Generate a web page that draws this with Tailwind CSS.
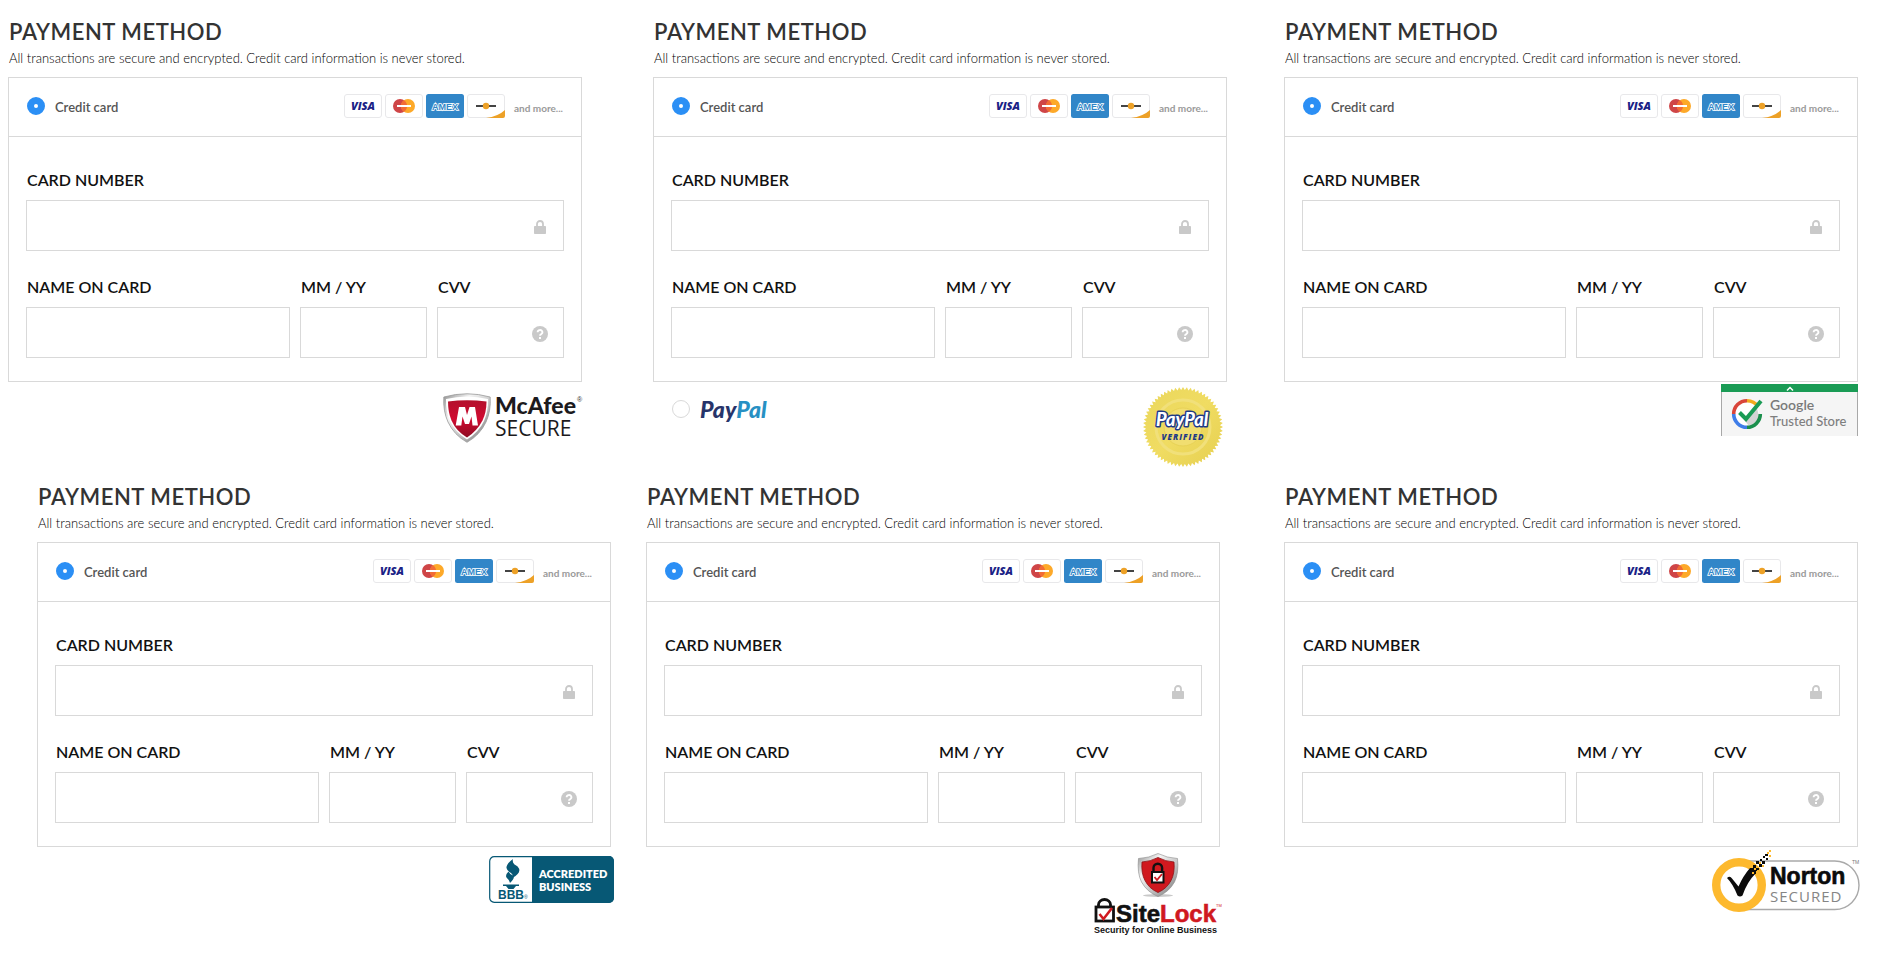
<!DOCTYPE html>
<html lang="en">
<head>
    <meta charset="UTF-8">
    <meta name="viewport" content="width=device-width, initial-scale=1.0">
    <title>Payment Method - Trust Badges</title>
    <script src="https://cdn.jsdelivr.net/npm/@tailwindcss/browser@4"></script>
</head>
<body class="bg-white font-['Lato',sans-serif] text-[#333]">

    <!-- payment form, copied into every section below -->
    <template id="payment-form">
        <h2 class="text-[22px] leading-8 font-semibold tracking-wide pl-px">PAYMENT METHOD</h2>
        <p class="text-[13px] leading-5 font-light text-black pl-px">All transactions are secure and encrypted. Credit card information is never stored.</p>
        <form class="mt-[9px] border border-[#d9d9d9]">
            <div class="flex items-center justify-between h-[59px] px-[18px] pb-[3px] border-b border-[#d9d9d9]">
                <label class="flex items-center gap-[10px] text-[13px] font-semibold text-[#555]">
                    <input type="radio" value="card" checked class="appearance-none size-[18px] rounded-full border border-[#d9d9d9] bg-white checked:border-[7px] checked:border-[#2b8ff5]">
                    <span class="pt-1">Credit card</span>
                </label>
                <div class="flex items-center gap-[3px]">
                    <svg class="w-[38px] h-6" viewBox="0 0 38 24">
                        <rect x="0.5" y="0.5" width="37" height="23" rx="2.5" fill="#fff" stroke="#e8e8ea"/>
                        <text x="19" y="16" text-anchor="middle" font-family="Open Sans" font-size="11" font-weight="800" font-style="italic" fill="#1a2286">VISA</text>
                    </svg>
                    <svg class="w-[38px] h-6" viewBox="0 0 38 24">
                        <rect x="0.5" y="0.5" width="37" height="23" rx="2.5" fill="#fff" stroke="#e8e8ea"/>
                        <circle cx="15" cy="12" r="7" fill="#cf4547"/>
                        <circle cx="23" cy="12" r="7" fill="#fda929"/>
                        <path d="M19 6.2a7 7 0 0 1 0 11.6a7 7 0 0 1 0-11.6z" fill="#f26b35"/>
                        <path d="M12 12h14" stroke="#fff" stroke-width="2"/>
                    </svg>
                    <svg class="w-[38px] h-6" viewBox="0 0 38 24">
                        <rect width="38" height="24" rx="2.5" fill="#3186c8"/>
                        <text x="19" y="15.500" text-anchor="middle" font-family="Liberation Sans" font-size="9" font-weight="700" fill="#3186c8" stroke="#fff" stroke-width="1.600" paint-order="stroke">AMEX</text>
                    </svg>
                    <svg class="w-[38px] h-6" viewBox="0 0 38 24">
                        <rect x="0.5" y="0.5" width="37" height="23" rx="2.5" fill="#fff" stroke="#e8e8ea"/>
                        <path d="M9 12h20" stroke="#444" stroke-width="2"/>
                        <circle cx="19" cy="12" r="3.2" fill="#eda127"/>
                        <path d="M38 16v6a2 2 0 0 1-2 2H19q12-1.500 19-8z" fill="#eda127"/>
                    </svg>
                    <span class="ml-[6px] pt-1 text-[10px] leading-4 font-bold text-[#9a9a9a]">and more...</span>
                </div>
            </div>
            <div class="px-[17px] pt-[31px] pb-[23px] text-[16px] leading-6 font-semibold text-[#111]">
                <label class="block">
                    <span class="block mb-2 pl-px">CARD NUMBER</span>
                    <span class="relative block">
                        <input type="text" name="number" inputmode="numeric" class="block w-full h-[51px] border border-[#d9d9d9] pl-3 pr-12 font-normal">
                        <svg class="absolute right-[18px] top-5 w-3 h-[14px]" viewBox="0 0 12 14">
                            <path d="M3 7V4a3 3 0 0 1 6 0v3" fill="none" stroke="#c9c9c9" stroke-width="1.800"/>
                            <rect y="6" width="12" height="8" rx="0.800" fill="#c9c9c9"/>
                        </svg>
                    </span>
                </label>
                <div class="grid grid-cols-[264fr_127fr_127fr] gap-[10px] mt-6">
                    <label class="block min-w-0">
                        <span class="block mb-2 pl-px">NAME ON CARD</span>
                        <input type="text" name="name" class="block w-full h-[51px] border border-[#d9d9d9] px-3 font-normal">
                    </label>
                    <label class="block min-w-0">
                        <span class="block mb-2 pl-px">MM / YY</span>
                        <input type="text" name="expiry" class="block w-full h-[51px] border border-[#d9d9d9] px-3 font-normal">
                    </label>
                    <label class="block min-w-0">
                        <span class="block mb-2 pl-px">CVV</span>
                        <span class="relative block">
                            <input type="text" name="cvv" inputmode="numeric" class="block w-full h-[51px] border border-[#d9d9d9] pl-3 pr-12 font-normal">
                            <svg class="absolute right-4 top-[19px] size-4" viewBox="0 0 16 16">
                                <circle cx="8" cy="8" r="8" fill="#c9c9c9"/>
                                <path d="M5.600 6.200a2.400 2.200 0 1 1 3.600 1.900q-1.200.6-1.200 1.700" fill="none" stroke="#fff" stroke-width="1.800"/>
                                <rect x="7" y="11" width="2" height="2" fill="#fff"/>
                            </svg>
                        </span>
                    </label>
                </div>
            </div>
        </form>
    </template>

    <main>
        <div class="flex items-start pt-4 pl-2 pr-[26px]">
            <section class="flex-1 min-w-0">
                <div data-form></div>
                <!-- McAfee -->
                <div class="flex justify-end pt-[11px]">
                    <svg class="w-[139px] h-[50px] overflow-visible" viewBox="0 0 139 50" role="img" aria-label="McAfee Secure">
                        <defs>
                            <linearGradient id="silver" x1="0" y1="0" x2="1" y2="1">
                                <stop offset="0" stop-color="#8f8f8f"/>
                                <stop offset="0.300" stop-color="#f4f4f4"/>
                                <stop offset="0.600" stop-color="#c4c4c4"/>
                                <stop offset="1" stop-color="#6f6f6f"/>
                            </linearGradient>
                            <linearGradient id="crimson" x1="0" y1="0" x2="0" y2="1">
                                <stop offset="0" stop-color="#b3102c"/>
                                <stop offset="0.500" stop-color="#d00a30"/>
                                <stop offset="1" stop-color="#8e0c22"/>
                            </linearGradient>
                        </defs>
                        <path d="M.8 4Q24-2.500 47.200 4Q48 18 43 29Q37 42 24 49.300Q11 42 5 29Q0 18 .8 4z" fill="url(#silver)" stroke="#999" stroke-width="0.800"/>
                        <path d="M3 6Q24 1 45 6Q45.500 18 41 28Q36 39 24 46.500Q12 39 7 28Q2.500 18 3 6z" fill="#fff"/>
                        <path d="M5 8.500Q24 6 43.500 8.500Q43.500 19 39.500 27.500Q34 38 24 44.500Q13 38 8.500 27.500Q5 19 5 8.500z" fill="url(#crimson)"/>
                        <path d="M12.700 32.500L16 14h6l2 8l2.500-8h5.500L35 32.500h-5.500l-1-9l-2.500 7.500h-4l-2.500-7.500l-1.200 9z" fill="#fff"/>
                        <text x="52" y="21" font-family="Lato" font-size="23" font-weight="900" fill="#1c1a1d">McAfee</text>
                        <text x="134" y="9" font-family="Liberation Sans" font-size="7" fill="#333">®</text>
                        <text x="52" y="43" font-family="Open Sans" font-size="21" fill="#1c1a1d">SECURE</text>
                    </svg>
                </div>
            </section>

            <section class="flex-1 min-w-0 ml-[71px]">
                <div data-form></div>
                <!-- PayPal -->
                <div class="flex items-start justify-between pt-[5px] pl-[19px] pr-1">
                    <label class="flex items-center gap-[10px] pt-3">
                        <input type="radio" name="method-2" value="paypal" class="appearance-none size-[18px] rounded-full border border-[#d9d9d9] bg-white checked:border-[7px] checked:border-[#2b8ff5]">
                        <span class="text-[23px] leading-5 font-black italic text-[#27346a]">Pay<span class="text-[#2790c3]">Pal</span></span>
                    </label>
                    <svg class="size-20" viewBox="0 0 80 80" role="img" aria-label="PayPal Verified">
                        <defs>
                            <linearGradient id="gold" x1="0" y1="0" x2="1" y2="1">
                                <stop offset="0" stop-color="#ead75c"/>
                                <stop offset="0.500" stop-color="#f0dc62"/>
                                <stop offset="1" stop-color="#e6cf50"/>
                            </linearGradient>
                        </defs>
                        <polygon id="seal" fill="url(#gold)"/>
                        <circle cx="40" cy="40" r="27" fill="none" stroke="#f1e07a" stroke-width="3"/>
                        <circle cx="40" cy="40" r="19" fill="#f1de70" stroke="#e8d256"/>
                        <text x="39" y="39" text-anchor="middle" font-family="Lato" font-size="18" font-weight="900" font-style="italic" fill="#fff" stroke="#1e3a86" stroke-width="3" stroke-linejoin="round" paint-order="stroke">PayPal</text>
                        <text x="40" y="53" text-anchor="middle" font-family="Open Sans" font-size="8" font-weight="800" font-style="italic" letter-spacing="1" fill="#1e3a86">VERIFIED</text>
                    </svg>
                </div>
            </section>

            <section class="flex-1 min-w-0 ml-[57px]">
                <div data-form></div>
                <!-- Google Trusted Store -->
                <div class="flex justify-end pt-[2px]">
                    <svg class="w-[137px] h-[52px]" viewBox="0 0 137 52" role="img" aria-label="Google Trusted Store">
                        <rect width="137" height="52" fill="#f5f5f5"/>
                        <path d="M.5 8v44M136.500 8v44" stroke="#a8a8a8"/>
                        <rect width="137" height="8" fill="#1a9b55"/>
                        <path d="M66 6.500l3-3l3 3" fill="none" stroke="#fff" stroke-width="1.500"/>
                        <circle cx="26" cy="30" r="12" fill="#fff"/>
                        <path d="M25 36L36 24L38 32Q36 40 28 42L19 31z" fill="#d4d4d4"/>
                        <g fill="none" stroke-width="3.600">
                            <path d="M12.700 30A13.300 13.300 0 0 1 26 16.700" stroke="#d9453a"/>
                            <path d="M26 16.700A13.300 13.300 0 0 1 37 22.500" stroke="#f2ab1d"/>
                            <path d="M39.300 30A13.300 13.300 0 0 1 26 43.300" stroke="#1a8f4c"/>
                            <path d="M26 43.300A13.300 13.300 0 0 1 12.700 30" stroke="#3f7de8"/>
                            <path d="M18.500 28.500l6.500 6.500L40 17" stroke="#1a9b55" stroke-width="4"/>
                        </g>
                        <text x="49" y="26" font-family="Lato" font-size="14" font-weight="600" fill="#7a7a7a">Google</text>
                        <text x="49" y="42" font-family="Lato" font-size="13" font-weight="500" fill="#7f7f7f">Trusted Store</text>
                    </svg>
                </div>
            </section>
        </div>

        <div class="flex items-start pt-[14px] pl-[37px] pr-[26px]">
            <section class="flex-1 min-w-0">
                <div data-form></div>
                <!-- BBB -->
                <div class="flex justify-end pt-[9px] -mr-[3px]">
                    <svg class="w-[125px] h-[47px]" viewBox="0 0 125 47" role="img" aria-label="BBB Accredited Business">
                        <rect x="0.700" y="0.700" width="123.600" height="45.600" rx="4.500" fill="#fff" stroke="#075875" stroke-width="1.200"/>
                        <path d="M43 0h77a5 5 0 0 1 5 5v37a5 5 0 0 1-5 5H43z" fill="#075875"/>
                        <g fill="#075875">
                            <path d="M24 3Q17 8 17.500 12Q18 15 22 17Q24.500 19 23.500 22Q32 17 30 12.500Q29 10 25.500 8.500Q23 6 24 3z"/>
                            <path d="M19.500 15.500Q16 19 17.500 21.500Q20 23.500 21 27Q26.500 22 24 19.500Q20.500 18 19.500 15.500z"/>
                            <path d="M14 28.500h16v1.500h-3l-2.500 3h-5L17 30h-3z"/>
                        </g>
                        <text x="9" y="43" font-family="Liberation Sans" font-size="12" font-weight="700" fill="#075875">BBB</text>
                        <text x="35" y="43" font-family="Liberation Sans" font-size="5" fill="#075875">®</text>
                        <text x="50" y="22" font-family="Lato" font-size="11" font-weight="800" fill="#fff">ACCREDITED</text>
                        <text x="50" y="35" font-family="Lato" font-size="11" font-weight="800" fill="#fff">BUSINESS</text>
                    </svg>
                </div>
            </section>

            <section class="flex-1 min-w-0 ml-[35px]">
                <div data-form></div>
                <!-- SiteLock -->
                <div class="flex justify-end pt-[6px] -mr-[2px]">
                    <svg class="w-[128px] h-[82px]" viewBox="0 0 128 82" role="img" aria-label="SiteLock, Security for Online Business">
                        <ellipse cx="64" cy="42.500" rx="15" ry="1.500" fill="#c9c9c9"/>
                        <path d="M64 .5Q73 5 83.500 5.500Q85 20 80.500 29Q75 39 64 43.500Q53 39 47.500 29Q43 20 44.500 5.500Q55 5 64 .5z" fill="url(#silver)" stroke="#888" stroke-width="0.600"/>
                        <path d="M64 4.500Q71.500 8.500 80 9Q81 20 77 27.500Q73 35.500 64 39.500Q55 35.500 51 27.500Q47 20 48 9Q56.500 8.500 64 4.500z" fill="#d0191f" stroke="#8b1014" stroke-width="0.800"/>
                        <path d="M59.500 18v-3a4.300 4.300 0 0 1 8.600 0v3" fill="none" stroke="#111" stroke-width="2.400"/>
                        <rect x="58" y="19" width="11.500" height="10.500" fill="#fff" stroke="#111" stroke-width="2"/>
                        <path d="M60.500 24l2.500 3l5-6" fill="none" stroke="#d0191f" stroke-width="1.800"/>
                        <path d="M4.500 53v-1.500a6 5 0 0 1 12 0V53" fill="none" stroke="#111" stroke-width="2.800"/>
                        <rect x="2" y="54" width="17.500" height="14" fill="#fff" stroke="#111" stroke-width="2.800"/>
                        <path d="M5.500 61l4 5L18 55" fill="none" stroke="#d0191f" stroke-width="2.600"/>
                        <text x="22" y="69" font-family="Liberation Sans" font-size="24" font-weight="700" fill="#111" stroke="#111" stroke-width="0.600">Site<tspan fill="#d0191f" stroke="#d0191f">Lock</tspan></text>
                        <text x="122" y="54" font-family="Liberation Sans" font-size="4" fill="#d0191f">TM</text>
                        <text x="0" y="80" font-family="Liberation Sans" font-size="9" font-weight="700" fill="#111">Security for Online Business</text>
                    </svg>
                </div>
            </section>

            <section class="flex-1 min-w-0 ml-[64px]">
                <div data-form></div>
                <!-- Norton -->
                <div class="flex justify-end pt-[3px] -mr-[2px]">
                    <svg class="w-[148px] h-[62px]" viewBox="0 0 148 62" role="img" aria-label="Norton Secured">
                        <rect x="5" y="11" width="142" height="48.500" rx="24.200" fill="#fff" stroke="#a9a9a9" stroke-width="1.400"/>
                        <circle cx="27" cy="35" r="22.800" fill="#fff" stroke="#fdb92e" stroke-width="8.400"/>
                        <path d="M15 28q3-2.500 5 .5l6.500 8Q31 26 38 18l6 5Q35 32 30.500 45.500q-2.500 2-5 0Q21 34 15 28z" fill="#0b0b0b"/>
                        <g fill="#0b0b0b">
                            <path d="M38 18h3v-3h3v3h3v3h-3v3h-5z"/>
                            <path d="M44 11h3v3h-3zM47 14h3v3h-3zM48 9h2v2h-2zM50 11h3v3h-3zM51 6h2v2h-2zM53 4h3v2h-3zM54 8h2v2h-2z"/>
                        </g>
                        <path d="M42 18h2v2h-2zM40 22h2v2h-2zM45 20h2v2h-2zM47 12h2v2h-2zM50 15h2v2h-2zM57 0h2v2h-2zM57 5h2v2h-2zM55 2h2v2h-2z" fill="#fdb92e"/>
                        <text x="58" y="34" font-family="Liberation Sans" font-size="23" font-weight="700" fill="#0b0b0b" stroke="#0b0b0b" stroke-width="0.600">Norton</text>
                        <text x="58" y="52" font-family="Open Sans" font-size="15" font-weight="500" letter-spacing="1" fill="#858585">SECURED</text>
                        <text x="140" y="14" font-family="Liberation Sans" font-size="5" fill="#777">TM</text>
                    </svg>
                </div>
            </section>
        </div>
    </main>

    <script>
        const template = document.getElementById('payment-form');

        document.querySelectorAll('[data-form]').forEach((holder, i) => {
            const form = template.content.cloneNode(true);
            // every section keeps its own radio group
            form.querySelector('input[type="radio"]').name = 'method-' + (i + 1);
            holder.appendChild(form);
        });

        // serrated edge of the gold seal
        const teeth = 64;
        const points = [];
        for (let i = 0; i < teeth * 2; i++) {
            const r = i % 2 ? 37 : 40;
            const a = Math.PI * i / teeth;
            points.push((40 + r * Math.cos(a)).toFixed(2) + ',' + (40 + r * Math.sin(a)).toFixed(2));
        }
        document.getElementById('seal').setAttribute('points', points.join(' '));
    </script>
</body>
</html>
